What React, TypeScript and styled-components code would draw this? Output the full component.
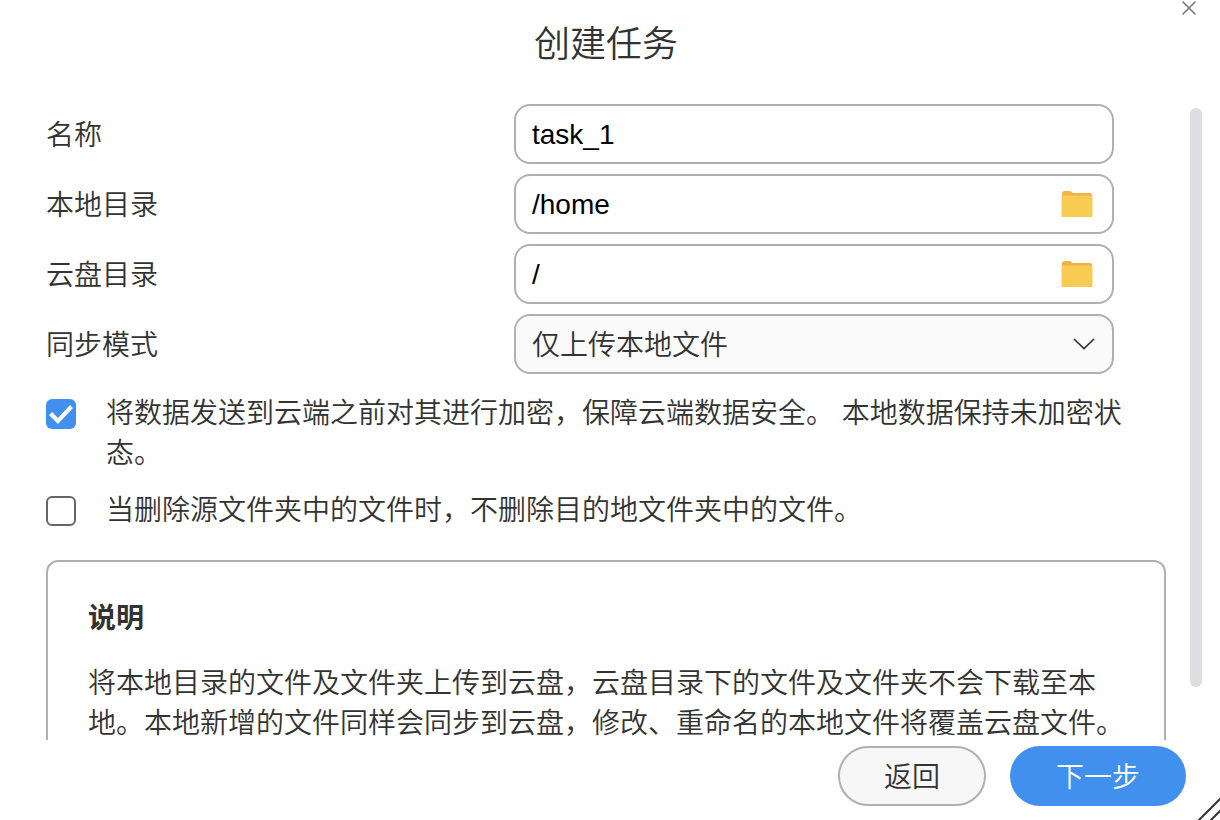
import React, { useEffect, useRef, useState } from "react";
import styled, { createGlobalStyle } from "styled-components";

const GlobalStyle = createGlobalStyle`
  *, *::before, *::after { box-sizing: border-box; }
  body {
    margin: 0;
    background: #ffffff;
    color: #333333;
    font-family: "Liberation Sans", "Noto Sans CJK SC", sans-serif;
    font-size: 28px;
    font-weight: 350;
    line-height: 40px;
  }
  button, input, select { font: inherit; }
`;

const Dialog = styled.form`
  position: relative;
  display: flex;
  flex-direction: column;
  height: 100vh;
  overflow: hidden;
`;

const Header = styled.header`
  flex: none;
  height: 104px;
  padding: 21px 54px 0 46px;
  text-align: center;
`;

const Title = styled.h1`
  margin: 0;
  font-size: 36px;
  line-height: 48px;
  font-weight: 350;
`;

const CloseButton = styled.button`
  position: absolute;
  top: 0;
  right: 22px;
  display: flex;
  padding: 0;
  border: 0;
  background: none;
  cursor: pointer;
`;

const Body = styled.div`
  flex: 1;
  min-height: 0;
  display: flex;
  gap: 24px;
  padding: 0 18px 0 46px;
`;

const Scroller = styled.div`
  flex: 1;
  min-width: 0;
  overflow-y: auto;
  scrollbar-width: none;
`;

const Track = styled.div`
  flex: none;
  width: 12px;
  padding-top: 4px;
`;

const Thumb = styled.div`
  width: 12px;
  border-radius: 6px;
  background: #dedee0;
`;

const Fields = styled.div`
  display: flex;
  flex-direction: column;
  gap: 10px;
  padding-right: 52px;
`;

const FieldRow = styled.div`
  display: grid;
  grid-template-columns: 468px 1fr;
  align-items: center;
`;

const FieldLabel = styled.label`
  padding-top: 3px;
`;

const Control = styled.div<{ $muted?: boolean }>`
  display: flex;
  align-items: center;
  height: 60px;
  padding: 0 ${(p) => (p.$muted ? 16 : 19)}px 0 16px;
  border: 2px solid #b0b0b0;
  border-radius: 16px;
  background: ${(p) => (p.$muted ? "#fafafa" : "#ffffff")};
`;

const TextInput = styled.input`
  flex: 1;
  min-width: 0;
  height: 42px;
  padding: 2px 0 0;
  border: 0;
  outline: 0;
  background: none;
  color: #000000;
`;

const Select = styled.select`
  flex: 1;
  height: 44px;
  margin-right: -24px;
  padding: 3px 24px 0 0;
  border: 0;
  outline: 0;
  appearance: none;
  background: none;
  color: #333333;
`;

const BrowseButton = styled.button`
  display: flex;
  padding: 0;
  border: 0;
  background: none;
  cursor: pointer;
`;

const Options = styled.div`
  display: flex;
  flex-direction: column;
  gap: 17px;
  padding: 20px 0 29px;
`;

const Option = styled.label`
  display: flex;
  align-items: flex-start;
  gap: 30px;
`;

const CheckBox = styled.input`
  flex: none;
  width: 30px;
  height: 30px;
  margin: 5px 0 0;
  appearance: none;
  border: 2px solid #666666;
  border-radius: 6px;
  background: #ffffff;

  &:checked {
    border: 0;
    background: #4190ee;
  }
  &:checked::before {
    content: "";
    display: block;
    width: 30px;
    height: 30px;
    background: #ffffff;
    clip-path: polygon(3px 16px, 6px 13px, 12px 19px, 24px 6px, 27px 9px, 12px 25px);
  }
`;

const Notes = styled.section`
  margin-bottom: 14px;
  padding: 37px 40px 38px;
  border: 2px solid #b0b0b0;
  border-radius: 12px;
`;

const NotesTitle = styled.h2`
  margin: 0 0 25px;
  font-size: 28px;
  line-height: 40px;
  font-weight: 700;
`;

const NotesText = styled.p`
  margin: 0;
`;

const Footer = styled.footer`
  flex: none;
  display: flex;
  justify-content: flex-end;
  gap: 24px;
  padding: 6px 34px 14px;
`;

const ActionButton = styled.button<{ $primary?: boolean }>`
  height: 60px;
  padding: 3px ${(p) => (p.$primary ? 46 : 44)}px 0;
  border: ${(p) => (p.$primary ? "0" : "2px solid #b0b0b0")};
  border-radius: 30px;
  background: ${(p) => (p.$primary ? "#4190ee" : "#f7f7f7")};
  color: ${(p) => (p.$primary ? "#ffffff" : "#333333")};
  cursor: pointer;
`;

const ResizeGrip = styled.svg`
  position: absolute;
  right: 0;
  bottom: 0;
`;

const CloseIcon = () => (
  <svg width="18" height="18" viewBox="0 0 18 18" fill="none" stroke="#777777" strokeWidth="1.5" aria-hidden="true">
    <path d="M2.5 1.5 L15.5 14.5 M15.5 1.5 L2.5 14.5" />
  </svg>
);

const FolderIcon = () => (
  <svg width="32" height="28" viewBox="0 0 32 28" aria-hidden="true">
    <path d="M1 10V3.500Q1 1 3.500 1H8Q9.500 1 10.500 2L11.500 3H29Q31 3 31 5V10Z" fill="#f4b04a" />
    <path d="M.500 5.500H31.500V27H.500Z" fill="#f8cc52" />
  </svg>
);

const ChevronIcon = () => (
  <svg width="24" height="14" viewBox="0 0 24 14" fill="none" stroke="#333333" strokeWidth="1.700" aria-hidden="true" pointerEvents="none">
    <path d="M2 2 L12 11.500 L22 2" />
  </svg>
);

function useThumb() {
  const ref = useRef<HTMLDivElement>(null);
  const [thumb, setThumb] = useState({ height: 0, offset: 0 });
  const update = () => {
    const el = ref.current;
    if (!el) return;
    const track = el.clientHeight - 4;
    const height = Math.round((track * el.clientHeight) / el.scrollHeight);
    setThumb({ height, offset: Math.round((track * el.scrollTop) / el.scrollHeight) });
  };
  useEffect(() => {
    update();
    window.addEventListener("resize", update);
    return () => window.removeEventListener("resize", update);
  }, []);
  return { ref, thumb, update };
}

export default function App() {
  const { ref, thumb, update } = useThumb();

  return (
    <>
      <GlobalStyle />
      <Dialog onSubmit={(e) => e.preventDefault()}>
        <Header>
          <Title>创建任务</Title>
          <CloseButton type="button" aria-label="关闭">
            <CloseIcon />
          </CloseButton>
        </Header>

        <Body>
          <Scroller ref={ref} onScroll={update}>
            <Fields>
              <FieldRow>
                <FieldLabel htmlFor="name">名称</FieldLabel>
                <Control>
                  <TextInput id="name" type="text" defaultValue="task_1" />
                </Control>
              </FieldRow>
              <FieldRow>
                <FieldLabel htmlFor="local">本地目录</FieldLabel>
                <Control>
                  <TextInput id="local" type="text" defaultValue="/home" />
                  <BrowseButton type="button" aria-label="选择本地目录">
                    <FolderIcon />
                  </BrowseButton>
                </Control>
              </FieldRow>
              <FieldRow>
                <FieldLabel htmlFor="cloud">云盘目录</FieldLabel>
                <Control>
                  <TextInput id="cloud" type="text" defaultValue="/" />
                  <BrowseButton type="button" aria-label="选择云盘目录">
                    <FolderIcon />
                  </BrowseButton>
                </Control>
              </FieldRow>
              <FieldRow>
                <FieldLabel htmlFor="mode">同步模式</FieldLabel>
                <Control $muted>
                  <Select id="mode">
                    <option>仅上传本地文件</option>
                  </Select>
                  <ChevronIcon />
                </Control>
              </FieldRow>
            </Fields>

            <Options>
              <Option>
                <CheckBox type="checkbox" defaultChecked />
                <span>将数据发送到云端之前对其进行加密，保障云端数据安全。 本地数据保持未加密状态。</span>
              </Option>
              <Option>
                <CheckBox type="checkbox" />
                <span>当删除源文件夹中的文件时，不删除目的地文件夹中的文件。</span>
              </Option>
            </Options>

            <Notes>
              <NotesTitle>说明</NotesTitle>
              <NotesText>
                将本地目录的文件及文件夹上传到云盘，云盘目录下的文件及文件夹不会下载至本地。本地新增的文件同样会同步到云盘，修改、重命名的本地文件将覆盖云盘文件。
              </NotesText>
            </Notes>
          </Scroller>
          <Track>
            <Thumb style={{ height: thumb.height, marginTop: thumb.offset }} />
          </Track>
        </Body>

        <Footer>
          <ActionButton type="button">返回</ActionButton>
          <ActionButton type="submit" $primary>
            下一步
          </ActionButton>
        </Footer>

        <ResizeGrip width="24" height="24" viewBox="0 0 24 24" fill="none" stroke="#333333" strokeWidth="2" aria-hidden="true">
          <path d="M1 26 L26 1 M13 26 L26 13" />
        </ResizeGrip>
      </Dialog>
    </>
  );
}
